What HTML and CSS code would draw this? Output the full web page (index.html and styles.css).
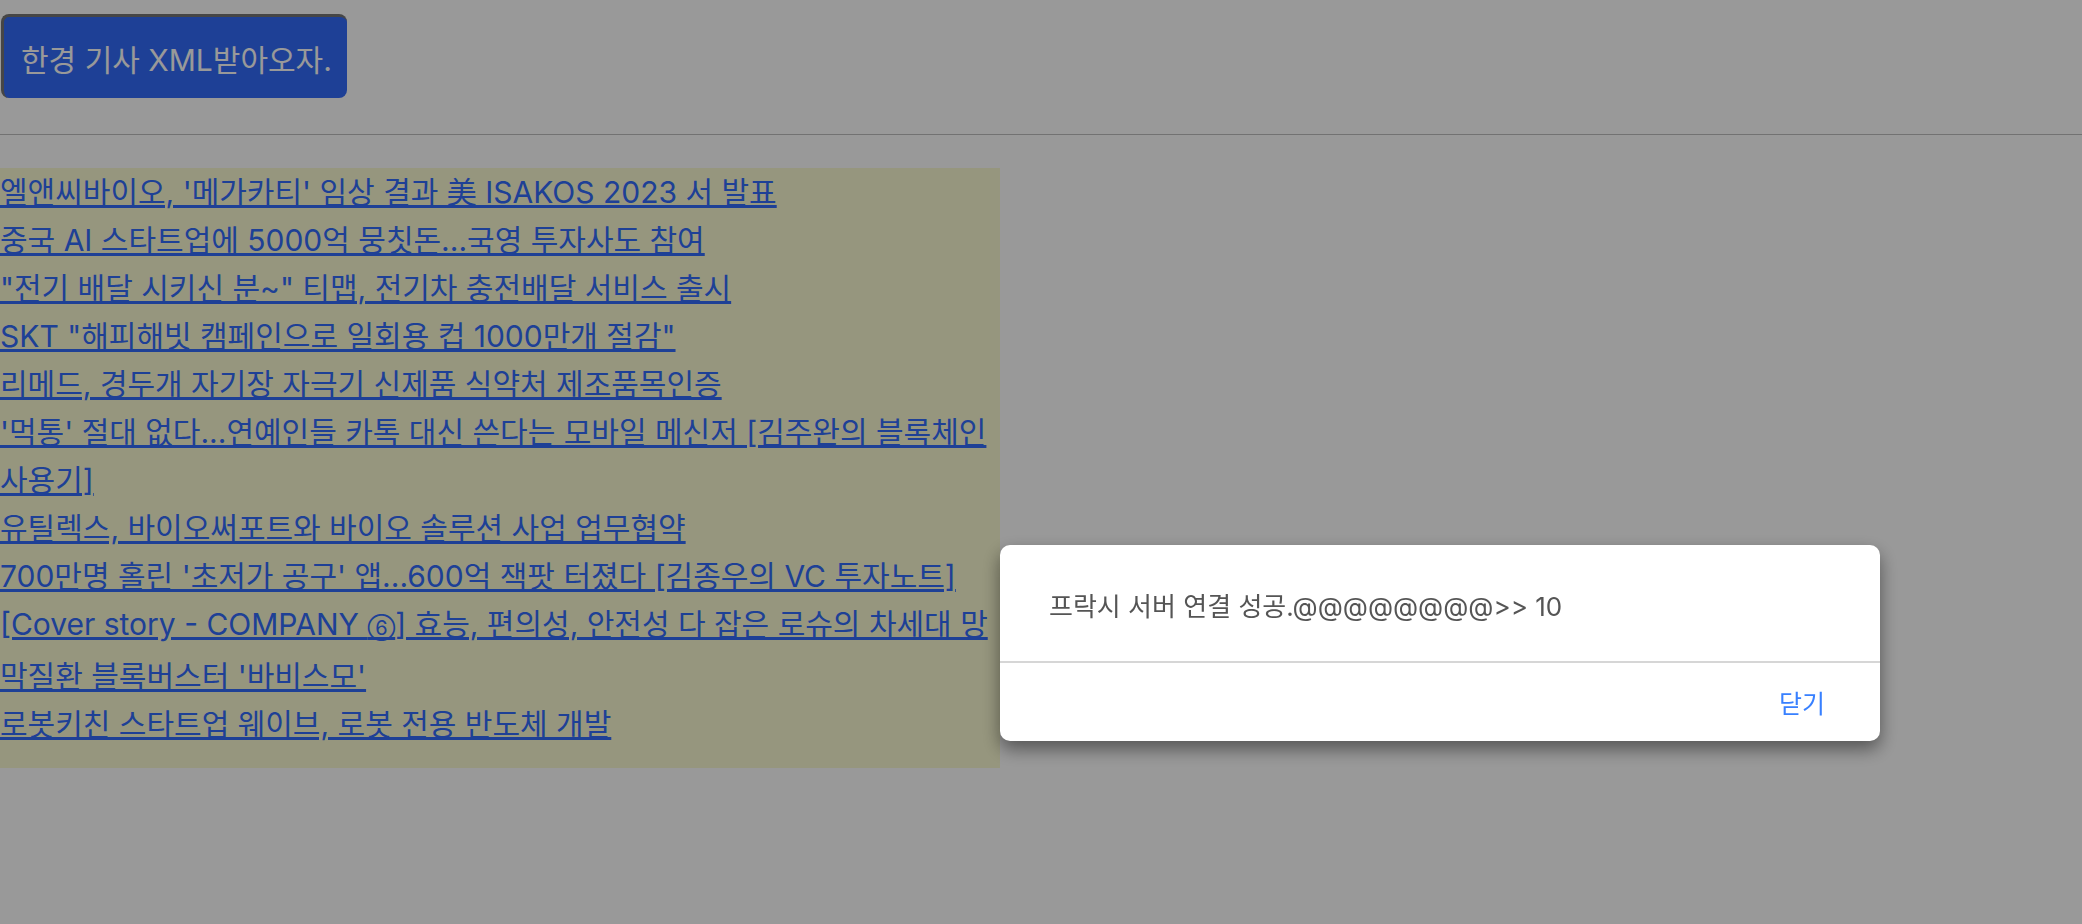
FILE: index.html
```html
<!DOCTYPE html>
<html lang="ko">
<head>
  <meta charset="UTF-8">
  <title>한경 기사</title>
  <link rel="stylesheet" href="styles.css">
</head>
<body>
  <button class="load-btn" id="loadBtn">한경 기사 XML받아오자.</button>
  <hr>
  <div class="news-list" id="newsList">
    <a href="#">엘앤씨바이오, '메가카티' 임상 결과 美 ISAKOS 2023 서 발표</a>
    <a href="#">중국 AI 스타트업에 5000억 뭉칫돈...국영 투자사도 참여</a>
    <a href="#">"전기 배달 시키신 분~" 티맵, 전기차 충전배달 서비스 출시</a>
    <a href="#">SKT "해피해빗 캠페인으로 일회용 컵 1000만개 절감"</a>
    <a href="#">리메드, 경두개 자기장 자극기 신제품 식약처 제조품목인증</a>
    <a href="#">'먹통' 절대 없다...연예인들 카톡 대신 쓴다는 모바일 메신저 [김주완의 블록체인 사용기]</a>
    <a href="#">유틸렉스, 바이오써포트와 바이오 솔루션 사업 업무협약</a>
    <a href="#">700만명 홀린 '초저가 공구' 앱...600억 잭팟 터졌다 [김종우의 VC 투자노트]</a>
    <a href="#">[Cover story - COMPANY <span class="circled">⑥</span>] 효능, 편의성, 안전성 다 잡은 로슈의 차세대 망막질환 블록버스터 '바비스모'</a>
    <a href="#">로봇키친 스타트업 웨이브, 로봇 전용 반도체 개발</a>
  </div>

  <!-- ===== Alert ===== -->
  <div class="overlay" id="alertOverlay">
    <div class="alert-box">
      <div class="alert-body">프락시 서버 연결 성공.@@@@@@@@&gt;&gt; 10</div>
      <div class="alert-footer">
        <span class="alert-close" id="alertClose">닫기</span>
      </div>
    </div>
  </div>
  <script>
    document.getElementById('alertClose').addEventListener('click', function() {
      document.getElementById('alertOverlay').style.display = 'none';
    });
  </script>
</body>
</html>
```

FILE: styles.css
```css
body {
  font-family: Inter, "Noto Sans CJK KR", sans-serif;
  background-color: #fff;
  margin: 0;
}
.load-btn {
  font-family: Inter, "Noto Sans CJK KR", sans-serif;
  font-size: 30px;
  color: #fff;
  background-color: #326bfa;
  height: 84px;
  margin: 14px 0 0 1px;
  padding: 0 15px 0 17px;
  border: 0;
  border-top: 3px solid #757575;
  border-left: 3px solid #757575;
  border-radius: 8px;
  box-sizing: border-box;
  cursor: pointer;
}
hr {
  margin: 36px 0 33px;
  border: 0;
  border-top: 1px solid #bfbfbf;
}
.news-list {
  width: 1000px;
  height: 600px;
  background-color: lightgoldenrodyellow;
  font-size: 30px;
  line-height: 48px;
}
.news-list a {
  display: block;
  color: #326bfa;
}
/* circled number renders too wide in the CJK font */
.circled {
  font-size: 20px;
}
/* Alert */
.overlay {
  position: fixed;
  top: 0;
  left: 0;
  right: 0;
  bottom: 0;
  background-color: rgba(0, 0, 0, 0.4);
}
.alert-box {
  position: absolute;
  left: 1000px;
  top: 545px;
  width: 880px;
  background-color: #fff;
  border-radius: 10px;
  box-shadow: 0 8px 18px rgba(0, 0, 0, 0.45);
  font-size: 26px;
}
.alert-body {
  height: 118px;
  display: flex;
  align-items: center;
  padding: 2px 49px 0;
  box-sizing: border-box;
  color: #555;
  border-bottom: 2px solid #d6d6d6;
}
.alert-footer {
  height: 78px;
  display: flex;
  align-items: center;
  justify-content: flex-end;
  padding: 0 55px;
}
.alert-close {
  font-size: 25px;
  color: #3880ff;
  cursor: pointer;
}
```
